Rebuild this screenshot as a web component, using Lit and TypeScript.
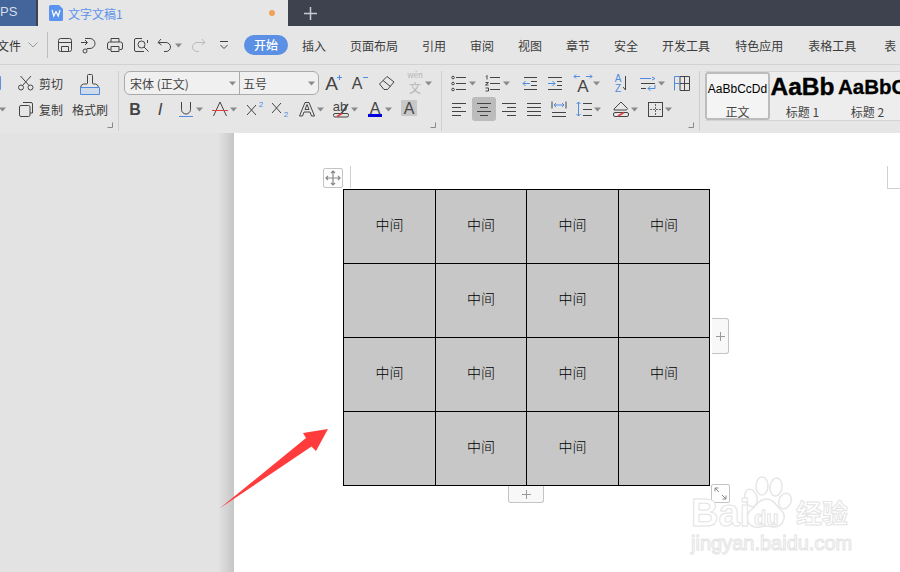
import { LitElement, html, css, svg } from "lit";
import { customElement } from "lit/decorators.js";

type Item = [number, number, unknown];
const place = (start: number, items: Item[]) => {
  let x = start;
  return items.map(([left, w, tpl]) => {
    const m = left - x;
    x = left + w;
    return html`<span class="slot" style="margin-left:${m}px;width:${w}px">${tpl}</span>`;
  });
};
const ico = (body: unknown) => html`<svg class="ico" width="20" height="20" viewBox="0 0 20 20">${body}</svg>`;
const ic = (cx: number, body: unknown): Item => [cx - 10, 20, ico(body)];
const caretT = html`<svg width="8" height="5" viewBox="0 0 8 5"><path d="M0 .5h7L3.5 4.5z" fill="#8a8a8a"/></svg>`;
const car = (cx: number): Item => [cx - 4, 8, caretT];
const launcher = html`<svg class="launch" width="6" height="6" viewBox="0 0 6 6"><path d="M.5 5.5h5V.5" fill="none" stroke="#888"/></svg>`;

const lines = (ys: number[], x1 = 3, x2 = 17) => ys.map((y) => svg`<path class="s" d="M${x1} ${y}.5H${x2}"/>`);

const I = {
  save: svg`<path class="s" d="M3.500 5.500a2 2 0 0 1 2-2h9a2 2 0 0 1 2 2v9a2 2 0 0 1-2 2h-9a2 2 0 0 1-2-2zM3.500 7.500h13M6.500 16.500v-5h7v5"/>`,
  saveAs: svg`<path class="s" d="M3 7.500h6M7 5l2.500 2.500L7 10M7 3.500h5a5 5 0 0 1 0 10h-3v1"/><circle class="s" cx="7" cy="16" r="2"/>`,
  print: svg`<path class="s" d="M6 7V3.500h8V7M5.500 14.500H4a1.500 1.500 0 0 1-1.500-1.500V9A2 2 0 0 1 4.500 7h11a2 2 0 0 1 2 2v4a1.500 1.500 0 0 1-1.500 1.500h-1.500M6 11.500h8v5H6z"/>`,
  preview: svg`<path class="s" d="M11 3.500H5a1.500 1.500 0 0 0-1.500 1.500v10A1.500 1.500 0 0 0 5 16.500h8M16.500 8V5"/><circle class="s" cx="10.500" cy="9.500" r="3.500"/><path class="s" d="M13 12l4.500 4.500"/>`,
  undo: svg`<path class="s" d="M6 4L3 7.500 6.500 10M3.500 7.500H11a4 4 0 0 1 0 9H9"/>`,
  redo: svg`<path class="s l" d="M14 4l3 3.500L13.500 10M16.500 7.500H9a4 4 0 0 0 0 9h2"/>`,
  custom: svg`<path class="s" d="M6 6.500h8M6.500 10l3.500 3.500L13.500 10"/>`,
  cut: svg`<circle class="s" cx="5" cy="14.500" r="2.500"/><circle class="s" cx="14.500" cy="14.500" r="2.500"/><path class="s" d="M6.500 12.500L15 3M13 12.500L4.500 3"/>`,
  copy: svg`<path class="s" d="M7 3.500h8a1.500 1.500 0 0 1 1.500 1.500v9H14"/><rect class="s" x="3.500" y="6.500" width="10.500" height="11" rx="1.500"/>`,
  brush: svg`<path class="s" d="M9.500 10V2.500a1 1 0 0 1 1-1h3a1 1 0 0 1 1 1V10a1 1 0 0 0 1 1h2a4 4 0 0 1 3 3.500H2.500A4 4 0 0 1 5.500 11h3a1 1 0 0 0 1-1z"/><path d="M2.500 14.500h19v7h-19z" fill="#cfdbea" stroke="#4f8be0"/>`,
  bold: svg`<text class="t b" x="10" y="16" text-anchor="middle" font-size="16">B</text>`,
  italic: svg`<text class="t" x="10" y="16" text-anchor="middle" font-size="17" font-style="italic">I</text>`,
  under: svg`<path class="s" d="M5.500 3v7.500a4.500 4.500 0 0 0 9 0V3"/><path d="M3 17.500h14" stroke="#4f8be0" fill="none"/>`,
  strike: svg`<path class="s" d="M3.500 17L10 3l6.500 14"/><path d="M2 11.500h16" stroke="#e0403a" fill="none"/>`,
  sup: svg`<path class="s" d="M3 6l9 10M12 6l-9 10"/><text class="t blue" x="17" y="8" text-anchor="middle" font-size="8">2</text>`,
  sub: svg`<path class="s" d="M3 4l9 10M12 4l-9 10"/><text class="t blue" x="17" y="18" text-anchor="middle" font-size="8">2</text>`,
  outline: svg`<path class="s" d="M2.500 17L8 3.500h4L17.500 17h-3L13 13H7l-1.500 4zM8 10.500h4L10 5.500z"/>`,
  high: svg`<text class="t" x="9" y="12" text-anchor="middle" font-size="13">ab</text><path d="M10 15l7-10" stroke="#444" stroke-width="1.500"/><rect class="s" x="2.500" y="14.500" width="15" height="3.500" rx="1.500"/><path d="M6 17.500l5-3" stroke="#e0403a" stroke-width="1.500"/>`,
  fcolor: svg`<text class="t" x="10" y="14.500" text-anchor="middle" font-size="16" font-weight="300">A</text><rect x="3" y="15" width="14" height="3" fill="#0000e0"/>`,
  shade: svg`<rect x="2" y="1" width="16" height="16" rx="1" fill="#c8c8c8"/><text class="t" x="10" y="15" text-anchor="middle" font-size="16" font-weight="300">A</text>`,
  grow: svg`<text class="t" x="8.500" y="17" text-anchor="middle" font-size="19" font-weight="300">A</text><path d="M14 4.500h5M16.500 2v5" stroke="#4f8be0" fill="none"/>`,
  shrink: svg`<text class="t" x="8" y="16" text-anchor="middle" font-size="16" font-weight="300">A</text><path d="M14 4.500h5" stroke="#4f8be0" fill="none"/>`,
  erase: svg`<path class="s" d="M2.500 11L10 3.500l7 5.500-6.500 7.500H7zM6 7.500l7.500 6"/>`,
  wen: svg`<text class="t l2" x="10" y="5" text-anchor="middle" font-size="8">wén</text><text class="t l2" x="10" y="20" text-anchor="middle" font-size="12">文</text>`,
  bullets: svg`<circle class="s" cx="4" cy="4.500" r="1.300"/><circle class="s" cx="4" cy="10.500" r="1.300"/><circle class="s" cx="4" cy="16.500" r="1.300"/><path class="s" d="M7 4.500h10M7 10.500h10M7 16.500h10"/>`,
  numbers: svg`<path class="s" d="M7 4.500h10M7 10.500h10M7 16.500h10M3 3.500l1-1v4M2.500 9.500h3l-3 2.500h3M2.500 15h3v3h-3"/>`,
  decind: svg`<path class="s" d="M4 4.500h13M11 8.500h6M11 12.500h6M4 16.500h13"/><path d="M3 10.500h7M5.500 8l-2.500 2.500L5.500 13" stroke="#4f8be0" fill="none"/>`,
  incind: svg`<path class="s" d="M3 4.500h14M12 8.500h5M12 12.500h5M3 16.500h14"/><path d="M3 10.500h7M7.500 8l2.500 2.500L7.500 13" stroke="#4f8be0" fill="none"/>`,
  awide: svg`<text class="t" x="10" y="19" text-anchor="middle" font-size="17" font-weight="300">A</text><path d="M1 3.500h6M3 1.500l-2 2 2 2M13 3.500h6M17 1.500l2 2-2 2" stroke="#4f8be0" fill="none"/>`,
  sort: svg`<text class="t blue" x="8" y="9" text-anchor="middle" font-size="10">A</text><text class="t blue" x="8" y="19" text-anchor="middle" font-size="10">Z</text><path class="s" d="M15.500 3v14l-2.500-3"/>`,
  lspace: svg`<path d="M2 5.500h11M14 4l3 1.500L14 7" stroke="#4f8be0" fill="none"/><path class="s" d="M3 10.500h14M3 15.500h5"/><path d="M17 12v3.500H10M12.500 13l-2.500 2.500 2.500 2.500" stroke="#4f8be0" fill="none"/>`,
  tbl: svg`<path class="s" d="M8 3.500h9.500v14H8zM8 10.500h9.500M12.500 3.500v14"/><path d="M2.500 3.500H8M2.500 10.500H8M2.500 3.500v14" stroke="#4f8be0" fill="none"/>`,
  left: [4, 8, 12, 16].map((y, i) => svg`<path class="s" d="M3 ${y}.5H${i % 2 ? 12 : 17}"/>`),
  center: [4, 8, 12, 16].map((y, i) => svg`<path class="s" d="M${i % 2 ? 6 : 3} ${y}.5H${i % 2 ? 14 : 17}"/>`),
  right: [4, 8, 12, 16].map((y, i) => svg`<path class="s" d="M${i % 2 ? 8 : 3} ${y}.5H17"/>`),
  just: lines([4, 8, 12, 16]),
  dist: svg`<path class="s" d="M3 2.500v7M17 2.500v7M3 13.500h14M3 17.500h14"/><path d="M5 6h10M7 4L5 6l2 2M13 4l2 2-2 2" stroke="#4f8be0" fill="none"/>`,
  lh: svg`<path class="s" d="M9 4.500h9M9 10.500h9M9 16.500h9"/><path d="M4.500 3v14M2.500 5l2-2 2 2M2.500 15l2 2 2-2" stroke="#4f8be0" fill="none"/>`,
  shading: svg`<path class="s" d="M3 10l7-7 6.500 6.500-1 1.500H3z"/><rect class="s" x="2.500" y="13.500" width="15" height="4" rx="1.500"/><path d="M7 17l6-3.500" stroke="#e0403a" stroke-width="1.500"/>`,
  border: svg`<rect class="s" x="3.500" y="3.500" width="14" height="14"/><path d="M10.500 5v11M5 10.500h11" stroke="#666" stroke-dasharray="2 1" fill="none"/>`,
};

const paw = svg`<g fill="#fff" stroke="#e6e6e6" stroke-width="1.500">
  <ellipse cx="12" cy="24" rx="6" ry="9" transform="rotate(-15 12 24)"/>
  <ellipse cx="23" cy="12" rx="6" ry="9"/>
  <ellipse cx="37" cy="13" rx="6" ry="9" transform="rotate(8 37 13)"/>
  <ellipse cx="46" cy="27" rx="6" ry="8" transform="rotate(22 46 27)"/>
  <path d="M28 25c7 0 9 7 14 11 6 5 3 17-7 17-3 0-5-1-8-1-4 0-7 2-11 1-9-2-10-12-4-17 5-4 8-11 16-11z"/>
</g>`;

@customElement("app-root")
export class AppRoot extends LitElement {
  static styles = css`
    :host { display: block; width: 900px; height: 572px; overflow: hidden; position: relative; background: #e3e3e3;
      font-family: "Noto Sans CJK SC", "Liberation Sans", sans-serif; font-size: 12px; color: #3c3c3c; }
    .tabs { height: 26px; background: #3e424f; display: flex; align-items: stretch; }
    .tab-ps { width: 36px; background: #44659b; color: #d6deea; font: 13px/24px "Liberation Sans", sans-serif; overflow: hidden; }
    .tab-doc { margin-left: 2px; width: 250px; background: #e6e6e6; display: flex; align-items: center; padding: 0 12px 0 11px; box-sizing: border-box; gap: 5px; color: #5c93ea; }
    .tab-doc .name { flex: 1; }
    .dot { width: 6px; height: 6px; border-radius: 50%; background: #eda258; margin-right: 1px; }
    .plus { margin-left: 16px; align-self: center; display: flex; }
    .menu { height: 39px; background: #e6e6e6; border-bottom: 1px solid #d2d2d2; box-sizing: border-box; display: flex; align-items: center; white-space: nowrap; }
    .file { margin-left: -3px; width: 24px; color: #333; flex: none; }
    .vsep { width: 1px; height: 26px; background: #bdbdbd; margin-left: 9px; flex: none; }
    .pill { background: #5b90e4; color: #fff; font-weight: 500; border-radius: 10px; width: 44px; height: 20px; line-height: 20px; text-align: center; flex: none; }
    .tabsrow { display: flex; gap: 24px; margin-left: 14px; flex: none; }
    .tabsrow span { flex: none; }
    .tabsrow span:nth-child(9), .tabsrow span:nth-child(10) { margin-left: 1px; }
    .tabsrow .last { margin-left: 4px; }
    .slot { display: inline-flex; align-items: center; justify-content: center; flex: none; height: 24px; }
    .ico { display: block; overflow: visible; }
    .s { fill: none; stroke: #444; stroke-width: 1; }
    .l { stroke: #bbb; }
    .t { font-family: "Liberation Sans", sans-serif; fill: #444; }
    .b { font-weight: 700; }
    .blue { fill: #4f8be0; }
    .l2 { fill: #b4b4b4; font-family: "Noto Sans CJK SC", sans-serif; }
    .ribbon { height: 68px; background: #e6e6e6; display: flex; padding-top: 6px; box-sizing: border-box; }
    .group { position: relative; border-right: 1px solid #cfcfcf; height: 60px; flex: none; display: flex; flex-direction: column; gap: 2px; }
    .row { display: flex; height: 24px; align-items: center; }
    .launch { position: absolute; bottom: 3px; right: 5px; }
    .g1 { width: 118px; flex-direction: row; gap: 0; }
    .g1 .col { width: 70px; display: flex; flex-direction: column; gap: 2px; }
    .g1 .brush { width: 40px; display: flex; flex-direction: column; align-items: center; margin-top: 2px; }
    .g1 .brush .lbl { line-height: 18px; margin-top: 4px; }
    .g2 { width: 322px; }
    .g3 { width: 257px; }
    .combo { height: 24px; width: 195px; box-sizing: border-box; border: 1px solid #aaa; border-radius: 6px; background: #f0f0f0; display: flex; align-items: center; }
    .combo .f { width: 115px; padding: 0 2px 0 5px; box-sizing: border-box; display: flex; align-items: center; justify-content: space-between; border-right: 1px solid #aaa; height: 100%; color: #444; }
    .combo .g { flex: 1; display: flex; align-items: center; justify-content: space-between; padding: 0 2px 0 3px; color: #444; }
    .sel { background: #bcbcbc; border-radius: 3px; width: 24px; height: 24px; display: flex; align-items: center; justify-content: center; }
    .styles { margin-left: 5px; height: 50px; flex: 1; display: flex; border-top: 1px solid #d4d4d4; border-bottom: 1px solid #d4d4d4; overflow: hidden; white-space: nowrap; background: #ededed; box-sizing: border-box; }
    .style { flex: none; width: 65px; display: flex; flex-direction: column; align-items: center; justify-content: space-between; box-sizing: border-box; height: 48px; }
    .style.on { border: 2px solid #bcbcbc; border-radius: 3px; background: #f4f4f4; }
    .sample { font-family: "Liberation Sans", sans-serif; color: #000; height: 30px; line-height: 30px; }
    .s1 { font-size: 12px; }
    .s2 { font-size: 24.500px; font-weight: 700; -webkit-text-stroke: .4px #000; }
    .s3 { font-size: 20.500px; font-weight: 700; -webkit-text-stroke: .3px #000; align-self: flex-start; margin-left: 3px; max-width: 62px; overflow: hidden; }
    .style .cap { line-height: 16px; color: #444; }
    .doc { height: 439px; display: flex; }
    .side { width: 234px; background: linear-gradient(90deg, #e3e3e3 0, #e3e3e3 218px, #c6c6c6 234px); flex: none; }
    .page { flex: 1; background: #fff; padding: 56px 0 0 109px; box-sizing: border-box; position: relative; }
    .grid { display: grid; grid-template-columns: 92px 91px 92px 91px; grid-auto-rows: 74px; width: 367px; background: #c7c7c7; border: solid #000; box-sizing: border-box; border-width: 1px 1px 0 0; }
    .cell { border-left: 1px solid #000; border-bottom: 1px solid #000; display: flex; align-items: center; justify-content: center; color: #000; font-size: 14px; font-weight: 300; box-sizing: border-box; padding-bottom: 6px; }
    .h { position: absolute; background: #f8f8f8; border: 1px solid #c4c4c4; box-sizing: border-box; display: flex; align-items: center; justify-content: center; }
    .move { left: 89px; top: 35px; width: 20px; height: 20px; border-radius: 2px; background: #fdfdfd; }
    .addr { left: 478px; top: 185px; width: 17px; height: 36px; border-left: none; border-radius: 0 3px 3px 0; }
    .addb { left: 274px; top: 353px; width: 36px; height: 17px; border-top: none; border-radius: 0 0 3px 3px; }
    .size { left: 477px; top: 351px; width: 19px; height: 19px; border-radius: 2px; background: #fff; }
    .mark { position: absolute; background: #d0d0d0; }
    .m1 { left: 116px; top: 33px; width: 1px; height: 22px; }
    .m2 { left: 653px; top: 33px; width: 1px; height: 22px; }
    .m3 { left: 653px; top: 55px; width: 13px; height: 1px; }
    .arrow { position: absolute; left: 0; top: 0; pointer-events: none; }
    .wm { position: absolute; left: 456px; top: 339px; width: 180px; height: 100px; color: #fff; pointer-events: none; }
    .wm span { position: absolute; -webkit-text-stroke: 1px #e4e4e4; font-family: "Liberation Sans", sans-serif; line-height: 1; white-space: nowrap; }
    .wm .bai { left: 1px; top: 24px; font-size: 38px; line-height: .9; font-weight: 700; }
    .wm .du { left: 64px; top: 36px; font-size: 20px; font-weight: 700; z-index: 1; }
    .wm .jy { left: 106px; top: 27px; font-size: 26px; font-weight: 700; font-family: "Noto Sans CJK SC", sans-serif; }
    .wm .url { left: 1px; top: 61px; font-size: 20px; }
    .wm svg { position: absolute; left: 49px; top: 2px; }
  `;

  render() {
    const words = ["插入", "页面布局", "引用", "审阅", "视图", "章节", "安全", "开发工具", "特色应用", "表格工具"];
    const pattern = [1, 1, 1, 1, 0, 1, 1, 0, 1, 1, 1, 1, 0, 1, 1, 0];
    return html`
      <div class="tabs">
        <div class="tab-ps">PS</div>
        <div class="tab-doc">
          <svg width="14" height="16" viewBox="0 0 14 16"><path d="M1.500 0H10l4 4v10.500a1.500 1.500 0 0 1-1.500 1.500h-11A1.500 1.500 0 0 1 0 14.500v-13A1.500 1.500 0 0 1 1.500 0z" fill="#5b93ee"/><path d="M3 5l1.800 6L7 6.500 9.200 11 11 5" fill="none" stroke="#fff" stroke-width="1.200"/></svg>
          <span class="name">文字文稿1</span><span class="dot"></span>
        </div>
        <span class="plus"><svg width="13" height="13" viewBox="0 0 13 13"><path d="M6.500 0v13M0 6.500h13" stroke="#c8cbd2" stroke-width="1.500"/></svg></span>
      </div>
      <div class="menu">
        <span class="file">文件</span>
        ${place(21, [
          [28, 10, html`<svg width="10" height="6" viewBox="0 0 10 6"><path d="M.5.500L5 5l4.500-4.500" fill="none" stroke="#999"/></svg>`],
        ])}
        <span class="vsep"></span>
        ${place(48, [
          ic(65, I.save), ic(88, I.saveAs), ic(115, I.print), ic(141, I.preview), ic(165, I.undo), car(179), ic(198, I.redo), ic(224, I.custom),
          [244, 44, html`<span class="pill">开始</span>`],
        ])}
        <div class="tabsrow">
          ${words.map((w) => html`<span>${w}</span>`)}<span class="last">表</span>
        </div>
      </div>
      <div class="ribbon">
        <div class="group g1">
          <div class="col">
            <div class="row">${place(0, [
              [-5, 7, html`<svg width="7" height="14" viewBox="0 0 7 14"><rect width="6" height="14" rx="1" fill="#5b90e4"/></svg>`],
              ic(26, I.cut), [38, 26, html`<span>剪切</span>`],
            ])}</div>
            <div class="row">${place(0, [
              car(3), ic(26, I.copy), [38, 26, html`<span>复制</span>`],
            ])}</div>
          </div>
          <div class="brush">
            <svg width="24" height="24" viewBox="0 0 24 24">${I.brush}</svg>
            <span class="lbl">格式刷</span>
          </div>
          ${launcher}
        </div>
        <div class="group g2">
          <div class="row">${place(119, [
            [124, 195, html`<div class="combo"><div class="f"><span>宋体 (正文)</span>${caretT}</div><div class="g"><span>五号</span>${caretT}</div></div>`],
            ic(333, I.grow), ic(359, I.shrink), ic(387, I.erase), ic(415, I.wen), car(429),
          ])}</div>
          <div class="row">${place(119, [
            ic(135, I.bold), ic(160, I.italic), ic(186, I.under), car(200), ic(220, I.strike), car(234),
            ic(254, I.sup), ic(279, I.sub), ic(307, I.outline), car(321), ic(341, I.high), car(355), ic(375, I.fcolor), car(389), ic(409, I.shade),
          ])}</div>
          ${launcher}
        </div>
        <div class="group g3">
          <div class="row">${place(442, [
            ic(459, I.bullets), car(473), ic(493, I.numbers), car(507), ic(530, I.decind), ic(555, I.incind), ic(583, I.awide), car(597),
            ic(620, I.sort), ic(648, I.lspace), car(662), ic(682, I.tbl),
          ])}</div>
          <div class="row">${place(442, [
            ic(459, I.left),
            [472, 24, html`<span class="sel">${ico(I.center)}</span>`],
            ic(509, I.right), ic(534, I.just), ic(559, I.dist), ic(584, I.lh), car(598), ic(621, I.shading), car(635), ic(655, I.border), car(669),
          ])}</div>
          ${launcher}
        </div>
        <div class="styles">
          <div class="style on"><span class="sample s1">AaBbCcDd</span><span class="cap">正文</span></div>
          <div class="style"><span class="sample s2">AaBb</span><span class="cap">标题 1</span></div>
          <div class="style"><span class="sample s3">AaBbC</span><span class="cap">标题 2</span></div>
        </div>
      </div>
      <div class="doc">
        <div class="side"></div>
        <div class="page">
          <div class="grid">
            ${pattern.map((p) => html`<div class="cell">${p ? "中间" : ""}</div>`)}
          </div>
          <span class="mark m1"></span><span class="mark m2"></span><span class="mark m3"></span>
          <div class="h move"><svg width="16" height="16" viewBox="0 0 16 16"><path d="M8 1v14M1 8h14M6 3l2-2 2 2M6 13l2 2 2-2M3 6L1 8l2 2M13 6l2 2-2 2" fill="none" stroke="#888" stroke-width="1.200"/></svg></div>
          <div class="h addr"><svg width="9" height="9" viewBox="0 0 9 9"><path d="M4.500 0v9M0 4.500h9" stroke="#999"/></svg></div>
          <div class="h addb"><svg width="9" height="9" viewBox="0 0 9 9"><path d="M4.500 0v9M0 4.500h9" stroke="#999"/></svg></div>
          <div class="h size"><svg width="15" height="15" viewBox="0 0 15 15"><path d="M2 2l4 4M2 2h3.500M2 2v3.500M13 13l-4-4M13 13H9.500M13 13V9.500" fill="none" stroke="#888"/></svg></div>
          <div class="wm">
            <svg width="60" height="56" viewBox="0 0 60 56">${paw}</svg>
            <span class="bai">Bai</span><span class="du">du</span><span class="jy">经验</span><span class="url">jingyan.baidu.com</span>
          </div>
        </div>
      </div>
      <svg class="arrow" width="900" height="572" viewBox="0 0 900 572">
        <path d="M219.500 508.500L306 438 303 433 328 429 316 451 311.500 446.500z" fill="#ff3b3b"/>
      </svg>
    `;
  }
}
